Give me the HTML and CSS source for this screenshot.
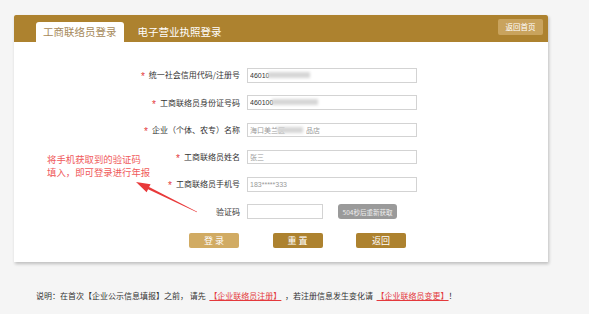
FILE: index.html
```html
<!DOCTYPE html>
<html lang="zh-CN">

<head>
    <meta charset="UTF-8">
    <meta name="viewport" content="width=device-width, initial-scale=1.0">
    <title>工商联络员登录</title>

    <link rel="stylesheet" href="styles.css">
</head>

<body>

    <div class="card">
        <!-- Tabs -->
        <div class="card-head">
            <div class="tab active">工商联络员登录</div>
            <div class="tab">电子营业执照登录</div>
            <a class="home-btn" href="#">返回首页</a>
        </div>

        <!-- Login Form -->
        <form class="login-form">
            <label class="label"><span class="star">*</span>统一社会信用代码/注册号</label>
            <div class="field">
                <input type="text" value="46010">
                <span class="mask" style="left: 21px; width: 42px;"></span>
            </div>

            <label class="label"><span class="star">*</span>工商联络员身份证号码</label>
            <div class="field">
                <input type="text" value="460100">
                <span class="mask" style="left: 25px; width: 46px;"></span>
            </div>

            <label class="label"><span class="star">*</span>企业（个体、农专）名称</label>
            <div class="field">
                <input type="text" class="muted" value="海口美兰区　　　品店">
                <span class="mask" style="left: 30px; width: 26px;"></span>
            </div>

            <label class="label"><span class="star">*</span>工商联络员姓名</label>
            <div class="field">
                <input type="text" class="muted" value="张三">
            </div>

            <label class="label"><span class="star">*</span>工商联络员手机号</label>
            <div class="field">
                <input type="text" class="muted" value="183*****333">
            </div>

            <label class="label">验证码</label>
            <div class="code-group">
                <input type="text" class="code-input">
                <button type="button" class="code-btn">504秒后重新获取</button>
            </div>

            <div class="actions">
                <button type="submit" class="btn btn-light">登 录</button>
                <button type="reset" class="btn">重 置</button>
                <button type="button" class="btn">返回</button>
            </div>
        </form>

        <!-- Annotation -->
        <p class="note">将手机获取到的验证码<br>填入，即可登录进行年报</p>
        <svg class="note-arrow" width="80" height="45" viewBox="0 0 80 45">
            <polygon points="12,7 26.6,9.2 25.1,12.1 73.1,36.7 72.9,37.3 24.1,14.3 22.6,17.2" fill="#e8393a" />
        </svg>
    </div>

    <p class="tips">说明：在首次【企业公示信息填报】之前，&nbsp;请先&nbsp;&nbsp;<a href="#">【企业联络员注册】</a>&nbsp;&nbsp;，若注册信息发生变化请&nbsp;&nbsp;<a href="#">【企业联络员变更】</a>！</p>

</body>

</html>
```

FILE: styles.css
```css
/* General Styles */
body {
    margin: 0;
    background: #f5f5f5;
    font-family: "Noto Sans CJK SC", "Liberation Sans", sans-serif;
    color: #333;
}

/* Card */
.card {
    position: relative;
    width: 534px;
    margin: 15px 0 0 14px;
    background: #fff;
    box-shadow: 1px 2px 3px rgba(0, 0, 0, 0.22);
    padding-bottom: 16px;
}

/* Header with tabs */
.card-head {
    display: flex;
    align-items: flex-end;
    gap: 7px;
    height: 27px;
    padding-left: 22px;
    background: #ad822f;
    border-radius: 2px 2px 0 0;
}

.tab {
    height: 20px;
    line-height: 20px;
    padding: 0 7px;
    font-size: 10.5px;
    color: #fff;
}

.tab.active {
    background: #fff;
    color: #a6895a;
    border-radius: 3px 3px 0 0;
}

.home-btn {
    align-self: flex-start;
    margin: 4px 5px 0 auto;
    width: 45px;
    height: 16px;
    line-height: 16px;
    text-align: center;
    font-size: 7.5px;
    color: #fff;
    text-decoration: none;
    background: #c9a35d;
    border-radius: 2px;
}

/* Form grid */
.login-form {
    display: grid;
    grid-template-columns: 226px 170px;
    grid-auto-rows: 14.5px;
    column-gap: 7px;
    row-gap: 12.8px;
    padding-top: 26px;
    margin: 0;
}

.label {
    display: flex;
    align-items: center;
    justify-content: flex-end;
    font-size: 8px;
    line-height: 1;
    color: #333;
}

.star {
    color: #e4393c;
    font-size: 10px;
    padding-top: 4px;
    margin-right: 4px;
    font-family: "Liberation Sans", sans-serif;
}

.field {
    position: relative;
}

.field input,
.code-input {
    display: block;
    box-sizing: border-box;
    width: 100%;
    height: 100%;
    margin: 0;
    padding: 0 2px;
    border: 1px solid #d3d3d3;
    font-family: "Liberation Sans", "Noto Sans CJK SC", sans-serif;
    font-size: 7px;
    color: #333;
    outline: none;
}

.field input.muted {
    color: #999;
}

/* Blurred private data */
.mask {
    position: absolute;
    top: 4px;
    height: 6px;
    background: #d6d6d6;
    filter: blur(1.5px);
}

/* Verification code */
.code-group {
    display: flex;
    gap: 15px;
}

.code-input {
    width: 76px;
}

.code-btn {
    width: 59px;
    padding: 0;
    border: none;
    border-radius: 3px;
    background: #9a9a9a;
    color: #eee;
    font-family: "Noto Sans CJK SC", sans-serif;
    font-size: 6.5px;
}

/* Action buttons */
.actions {
    grid-column: 1 / -1;
    display: flex;
    gap: 33.5px;
    margin-top: 1px;
    padding-left: 175px;
    height: 15px;
}

.btn {
    width: 50px;
    height: 15px;
    padding: 0;
    border: none;
    border-radius: 2px;
    background: #ad822f;
    color: #fff;
    font-family: "Noto Sans CJK SC", sans-serif;
    font-size: 9px;
}

.btn-light {
    background: #d1ab63;
}

/* Annotation */
.note {
    position: absolute;
    left: 33px;
    top: 138px;
    margin: 0;
    font-size: 9.4px;
    line-height: 13px;
    color: #f05a5b;
}

.note-arrow {
    position: absolute;
    left: 110px;
    top: 160px;
}

/* Footer tips */
.tips {
    margin: 28px 0 0 36px;
    font-size: 8px;
    color: #333;
}

.tips a {
    color: #e4393c;
}
```
